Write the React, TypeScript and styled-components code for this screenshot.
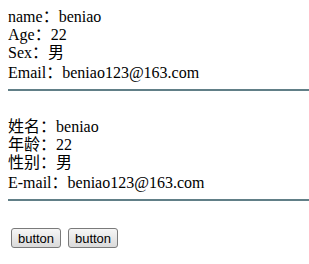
import styled, { createGlobalStyle } from 'styled-components'

const GlobalStyle = createGlobalStyle`
  body {
    margin: 8px 0 8px 8px;
    background: #fff;
    font-family: 'Liberation Serif', 'Noto Sans CJK SC', serif;
    font-size: 16px;
    color: #000;
  }
`

const people = [
  [
    ['name', 'beniao'],
    ['Age', '22'],
    ['Sex', '男'],
    ['Email', 'beniao123@163.com'],
  ],
  [
    ['姓名', 'beniao'],
    ['年龄', '22'],
    ['性别', '男'],
    ['E-mail', 'beniao123@163.com'],
  ],
]

const App = () => {
  return (
    <>
      <GlobalStyle />
      {people.map((rows, i) => (
        <Section key={i} $first={i === 0}>
          {rows.map(([label, value], j) => (
            <Line key={label} $last={j === rows.length - 1}>
              {label}：{value}
            </Line>
          ))}
          <Rule />
        </Section>
      ))}
      <Buttons>
        <Button>button</Button>
        <Button>button</Button>
      </Buttons>
    </>
  )
}
export default App

const Section = styled.div<{ $first?: boolean }>`
  padding-top: ${(p) => (p.$first ? '0' : '27px')};
`

const Line = styled.div<{ $last?: boolean }>`
  line-height: 18px;
  height: 18px;
  padding-top: ${(p) => (p.$last ? '2px' : '0')};
`

const Rule = styled.div`
  margin-top: 7px;
  height: 2px;
  background: #617f87;
`

const Buttons = styled.div`
  display: flex;
  gap: 7px;
  padding: 27px 0 0 3px;
`

const Button = styled.button`
  width: 50px;
  height: 20px;
  padding: 0;
  font-family: 'Liberation Sans', Arial, sans-serif;
  font-size: 13px;
  color: #000;
  border: 1px solid #7a7a7a;
  border-radius: 3px;
  background: linear-gradient(#f6f6f6, #dadada);
`
